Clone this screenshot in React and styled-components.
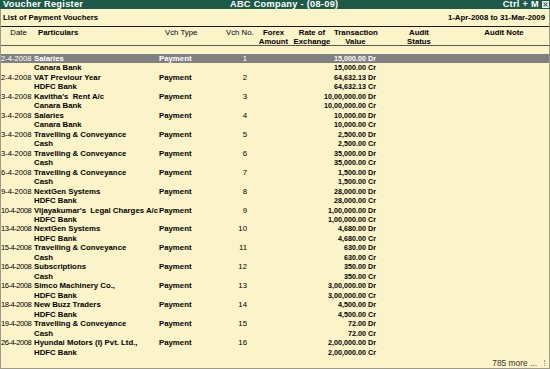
import { createGlobalStyle, styled } from "styled-components";

const vouchers = [
    ['2-4-2008', 'Salaries', 'Canara Bank', 1, '15,000.00'],
    ['2-4-2008', 'VAT Previour Year', 'HDFC Bank', 2, '64,632.13'],
    ['3-4-2008', "Kavitha's  Rent A/c", 'Canara Bank', 3, '10,00,000.00'],
    ['3-4-2008', 'Salaries', 'Canara Bank', 4, '10,000.00'],
    ['3-4-2008', 'Travelling & Conveyance', 'Cash', 5, '2,500.00'],
    ['3-4-2008', 'Travelling & Conveyance', 'Cash', 6, '35,000.00'],
    ['6-4-2008', 'Travelling & Conveyance', 'Cash', 7, '1,500.00'],
    ['9-4-2008', 'NextGen Systems', 'HDFC Bank', 8, '28,000.00'],
    ['10-4-2008', "Vijayakumar's  Legal Charges A/c", 'HDFC Bank', 9, '1,00,000.00'],
    ['13-4-2008', 'NextGen Systems', 'HDFC Bank', 10, '4,680.00'],
    ['15-4-2008', 'Travelling & Conveyance', 'Cash', 11, '630.00'],
    ['16-4-2008', 'Subscriptions', 'Cash', 12, '350.00'],
    ['16-4-2008', 'Simco Machinery Co.,', 'HDFC Bank', 13, '3,00,000.00'],
    ['18-4-2008', 'New Buzz Traders', 'HDFC Bank', 14, '4,500.00'],
    ['19-4-2008', 'Travelling & Conveyance', 'Cash', 15, '72.00'],
    ['26-4-2008', 'Hyundai Motors (I) Pvt. Ltd.,', 'HDFC Bank', 16, '2,00,000.00'],
];

const columns = [
    { title: ['Date'], width: 35, align: 'center', bold: false },
    { title: ['Particulars'], width: 121, align: 'left', pad: 2, bold: true },
    { title: ['Vch Type'], width: 60, align: 'left', pad: 8, bold: false },
    { title: ['Vch No.'], width: 40, align: 'left', pad: 9, bold: false },
    { title: ['Forex', 'Amount'], width: 33, align: 'center', bold: true },
    { title: ['Rate of', 'Exchange'], width: 44, align: 'center', bold: true },
    { title: ['Transaction', 'Value'], width: 43, align: 'center', bold: true },
    { title: ['Audit', 'Status'], width: 84, align: 'center', bold: true },
    { title: ['Audit Note'], width: 86, align: 'center', bold: true },
];

export default function App() {
    return (
        <>
            <GlobalStyle />
            <Window>
                <TitleBar>
                    <span>Voucher Register</span>
                    <span>ABC Company - (08-09)</span>
                    <TitleRight>
                        Ctrl + M
                        <svg width="7" height="7" viewBox="0 0 7 7">
                            <rect x="0.5" y="0.5" width="6" height="6" fill="#c9d3cf" stroke="#e8eeea" />
                            <path d="M1.8 1.8 L5.2 5.2 M5.2 1.8 L1.8 5.2" stroke="#1d5a48" strokeWidth="1" />
                        </svg>
                    </TitleRight>
                </TitleBar>
                <Panel>
                    <SubHeader>
                        <span>List of Payment Vouchers</span>
                        <span>1-Apr-2008 to 31-Mar-2009</span>
                    </SubHeader>
                    <HeaderRow>
                        {columns.map((c) => (
                            <HeadCell key={c.title[0]} $width={c.width} $align={c.align} $pad={c.pad || 0} $bold={c.bold}>
                                {c.title.map((t) => <div key={t}>{t}</div>)}
                            </HeadCell>
                        ))}
                    </HeaderRow>
                    <Rows>
                        {vouchers.map((v, i) => (
                            <div key={v[3]}>
                                <Row $active={i === 0}>
                                    <DateCell $long={v[0].length > 8}>{v[0]}</DateCell>
                                    <Text>{v[1]}</Text>
                                    <Text>Payment</Text>
                                    <NumCell>{v[3]}</NumCell>
                                    <Amount>{v[4]} Dr</Amount>
                                </Row>
                                <Row>
                                    <DateCell />
                                    <Text>{v[2]}</Text>
                                    <Text />
                                    <NumCell />
                                    <Amount>{v[4]} Cr</Amount>
                                </Row>
                            </div>
                        ))}
                    </Rows>
                    <Footer>
                        785 more ...
                        <ScrollMark />
                    </Footer>
                </Panel>
            </Window>
        </>
    );
}

const GlobalStyle = createGlobalStyle`
    body {
        margin: 0;
        background: #fbf4c9;
        font-family: "Liberation Sans", Arial, sans-serif;
        color: #000000;
    }
`;

const Window = styled.div`
    width: 550px;
    height: 369px;
    display: flex;
    flex-direction: column;
    overflow: hidden;
    background: #fbf4c9;
`;

const TitleBar = styled.div`
    height: 9px;
    flex-shrink: 0;
    background: #1d5a48;
    color: #ffffff;
    font-weight: bold;
    font-size: 9.2px;
    letter-spacing: 0.3px;
    line-height: 9px;
    display: grid;
    grid-template-columns: 227px auto 1fr;
    padding-left: 3px;
    padding-right: 1px;
    white-space: nowrap;
    overflow: hidden;
`;

const TitleRight = styled.span`
    display: flex;
    justify-content: flex-end;
    align-items: center;
    gap: 3px;
`;

const Panel = styled.div`
    flex: 1;
    display: flex;
    flex-direction: column;
    border-left: 1px solid #9c9a8a;
    border-right: 1px solid #9c9a8a;
    border-bottom: 1px solid #9c9a8a;
`;

const SubHeader = styled.div`
    height: 17px;
    flex-shrink: 0;
    display: flex;
    justify-content: space-between;
    align-items: center;
    padding: 0 4px 0 2px;
    font-weight: bold;
    font-size: 7.8px;
    border-bottom: 1px solid #1a1a1a;
`;

const HeaderRow = styled.div`
    height: 19px;
    flex-shrink: 0;
    display: flex;
    padding-top: 1px;
    box-sizing: border-box;
    border-bottom: 1px solid #5a5a50;
    font-size: 7.8px;
    line-height: 9.3px;
`;

const HeadCell = styled.div`
    width: ${(p) => p.$width}px;
    flex-shrink: 0;
    text-align: ${(p) => p.$align};
    padding-left: ${(p) => p.$pad}px;
    box-sizing: border-box;
    font-weight: ${(p) => (p.$bold ? 'bold' : 'normal')};
    white-space: nowrap;
`;

const Rows = styled.div`
    margin-top: 8px;
    display: flex;
    flex-direction: column;
`;

const Row = styled.div`
    height: 9.47px;
    line-height: 9.47px;
    display: grid;
    grid-template-columns: 33px 125px 58px 30px 129px 1fr;
    background: ${(p) => (p.$active ? '#808080' : 'transparent')};
    color: ${(p) => (p.$active ? '#ffffff' : '#000000')};
    white-space: pre;
    overflow: hidden;
`;

const DateCell = styled.span`
    font-size: 7.6px;
    letter-spacing: ${(p) => (p.$long ? '-0.5px' : '0')};
`;

const Text = styled.span`
    font-size: 7.8px;
    font-weight: bold;
`;

const NumCell = styled.span`
    font-size: 7.8px;
    text-align: right;
`;

const Amount = styled.span`
    font-size: 7.2px;
    font-weight: bold;
    text-align: right;
`;

const Footer = styled.div`
    margin-top: auto;
    height: 10px;
    display: flex;
    justify-content: flex-end;
    align-items: center;
    gap: 7px;
    padding-right: 3px;
    font-size: 8.4px;
    color: #333333;
`;

const ScrollMark = styled.span`
    width: 1px;
    height: 6px;
    border-left: 1px dotted #9a9a8a;
`;
